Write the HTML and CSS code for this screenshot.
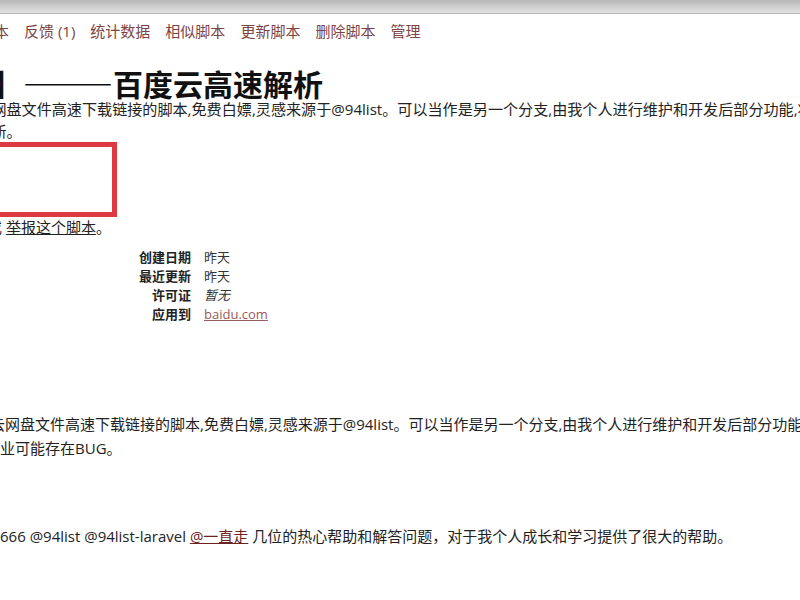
FILE: index.html
```html
<!DOCTYPE html>
<html lang="zh-CN">
<head>
<meta charset="utf-8">
<title>百度云高速解析</title>
<link rel="stylesheet" href="styles.css">
</head>
<body>
<div class="topbar"></div>
<nav class="tabs">
  <a class="tab">历史版本</a>
  <a class="tab">反馈 (1)</a>
  <a class="tab">统计数据</a>
  <a class="tab">相似脚本</a>
  <a class="tab">更新脚本</a>
  <a class="tab">删除脚本</a>
  <a class="tab">管理</a>
</nav>
<h2 class="title">【百度网盘】———百度云高速解析</h2>
<p class="desc">
  <span class="line">获取百度网盘文件高速下载链接的脚本,免费白嫖,灵感来源于@94list。可以当作是另一个分支,由我个人进行维护和开发后部分功能,将会陆续添加。</span>
  <span class="line">将持续更新。</span>
</p>
<div class="redbox"></div>
<p class="report">或 <a class="ulink">举报这个脚本</a>。</p>
<dl class="meta">
  <dt>创建日期</dt><dd>昨天</dd>
  <dt>最近更新</dt><dd>昨天</dd>
  <dt>许可证</dt><dd><em>暂无</em></dd>
  <dt>应用到</dt><dd><a class="site">baidu.com</a></dd>
</dl>
<div class="info">
  <span class="line">获取百度云网盘文件高速下载链接的脚本,免费白嫖,灵感来源于@94list。可以当作是另一个分支,由我个人进行维护和开发后部分功能,将会陆续添加。</span>
  <span class="line second">业可能存在BUG。</span>
</div>
<p class="thanks">666 @94list @94list-laravel <a class="mention">@一直走</a> 几位的热心帮助和解答问题，对于我个人成长和学习提供了很大的帮助。</p>
</body>
</html>
```

FILE: styles.css
```css
html, body {
  margin: 0;
  padding: 0;
  width: 800px;
  height: 600px;
  overflow: hidden;
  background: #ffffff;
}
body {
  font-family: "Open Sans", "Noto Sans CJK SC", sans-serif;
  color: #222222;
  font-size: 15px;
}
.topbar {
  height: 13px;
  background: linear-gradient(#b8b8b8, #e2e2e2);
  border-bottom: 1px solid #b4b4b4;
}
.tabs {
  display: flex;
  gap: 15px;
  margin: 5px 0 0 -51px;
  height: 24px;
  line-height: 24px;
  white-space: nowrap;
}
.tab {
  color: #7d4444;
  font-size: 15px;
}
.title {
  margin: 25px 0 0 -157px;
  font-family: "Noto Sans CJK SC", sans-serif;
  font-size: 30px;
  font-weight: bold;
  line-height: 30px;
  color: #111111;
  white-space: nowrap;
}
.desc, .info {
  margin: 0 0 0 -69px;
  font-size: 15.1px;
  line-height: 22px;
  white-space: nowrap;
}
.line {
  display: block;
}
.redbox {
  margin-left: -100px;
  width: 207px;
  height: 65px;
  border: 5px solid #dc3a40;
}
.report {
  margin: 0 0 0 -13px;
  line-height: 20px;
  white-space: nowrap;
}
.ulink {
  color: #222222;
  text-decoration: underline;
}
.meta {
  display: grid;
  grid-template-columns: 191px auto;
  column-gap: 13px;
  margin: 11px 0 0 0;
  font-size: 13px;
  line-height: 19px;
}
.meta dt {
  text-align: right;
  font-weight: bold;
  color: #222222;
}
.meta dd {
  margin: 0;
  color: #333333;
}
.site {
  color: #9a5c5c;
  text-decoration: underline;
}
.info {
  margin-top: 88px;
  margin-left: -70px;
  font-size: 15px;
  line-height: 24px;
}
.info .second {
  margin-left: 70px;
}
.thanks {
  margin: 66px 0 0 0;
  line-height: 20px;
  white-space: nowrap;
}
.mention {
  color: #6d2222;
  text-decoration: underline;
}
```
